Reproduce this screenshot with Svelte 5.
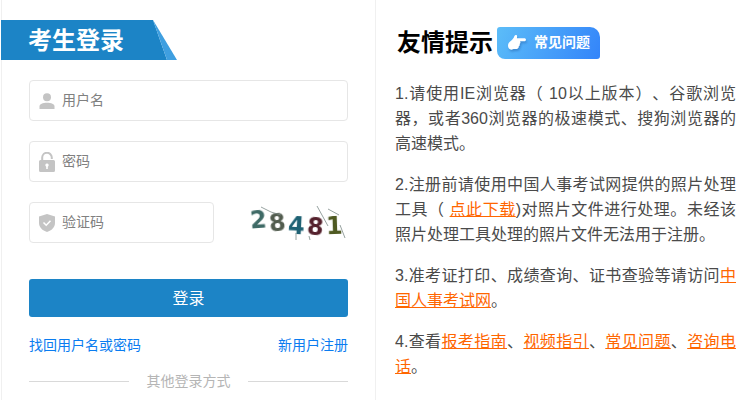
<script>
    const digits = [
        { ch: '2', color: '#3f6a66', rotate: -4, y: -3 },
        { ch: '8', color: '#525c4e', rotate: -6, y: 0 },
        { ch: '4', color: '#1f6274', rotate: 3, y: 3 },
        { ch: '8', color: '#54202c', rotate: 5, y: 4 },
        { ch: '1', color: '#4f5a22', rotate: -2, y: 3 }
    ];
</script>

<div class="page">
    <section class="login">
        <div class="banner">
            <svg class="ribbon" width="176" height="40" viewBox="0 0 176 40">
                <polygon points="0,0 152,0 166,40 0,40" fill="#1c84c6" />
                <polygon points="152,0 176,40 166,40" fill="#3f9fe0" />
            </svg>
            <h2>考生登录</h2>
        </div>

        <form class="form">
            <div class="field">
                <svg width="16" height="16" viewBox="0 0 16 16">
                    <circle cx="8" cy="4.200" r="4" fill="#c4c4c4" />
                    <path d="M0.500 16v-2.600c0-2.200 3.200-3.600 7.500-3.600s7.500 1.400 7.500 3.600V16z" fill="#c4c4c4" />
                </svg>
                <span>用户名</span>
            </div>
            <div class="field">
                <svg width="16" height="20" viewBox="0 0 16 20">
                    <path d="M3.200 9V5.600a4.800 4.800 0 0 1 9.600 0V7" fill="none" stroke="#c4c4c4" stroke-width="2" />
                    <path fill-rule="evenodd" d="M1.500 8h13a1.500 1.500 0 0 1 1.500 1.500v9a1.500 1.500 0 0 1-1.500 1.500h-13A1.500 1.500 0 0 1 0 18.500v-9A1.500 1.500 0 0 1 1.500 8zM8 11.500a1.700 1.700 0 0 0-.8 3.200V17h1.600v-2.300A1.700 1.700 0 0 0 8 11.500z" fill="#c4c4c4" />
                </svg>
                <span>密码</span>
            </div>
            <div class="code-row">
                <div class="field short">
                    <svg width="16" height="18" viewBox="0 0 16 18">
                        <path d="M8 0l8 2.600v6.400c0 4.300-3.400 7.500-8 9-4.600-1.500-8-4.700-8-9V2.600z" fill="#c4c4c4" />
                        <path d="M4.500 8.500l2.700 2.700 4.300-4.500" fill="none" stroke="#fff" stroke-width="1.500" />
                    </svg>
                    <span>验证码</span>
                </div>
                <div class="captcha">
                    {#each digits as d}
                        <b style="color: {d.color}; transform: translateY({d.y}px) rotate({d.rotate}deg)">{d.ch}</b>
                    {/each}
                    <svg class="noise" width="99" height="35" viewBox="0 0 99 35">
                        <path d="M12 2l10 5M22 7l10 3M68 1l11 20M79 4l11 6M91 20l5 13M47 28v7M60 31l1 4" stroke="#7c8a88" stroke-width="0.800" fill="none" />
                    </svg>
                </div>
            </div>
            <button type="button" class="submit"><span>登录</span></button>
            <div class="links">
                <a href="#top">找回用户名或密码</a>
                <a href="#top">新用户注册</a>
            </div>
            <div class="other">
                <i></i>
                <span>其他登录方式</span>
                <i></i>
            </div>
        </form>
    </section>

    <section class="tips">
        <div class="tips-head">
            <h2>友情提示</h2>
            <div class="faq">
                <svg width="18" height="16" viewBox="0 0 18 16">
                    <path d="M7.200 0.300c1-.6 2 .1 1.900 1.200l-.2 1.700h7.400c1 0 1.700.6 1.700 1.500s-.7 1.500-1.700 1.500h-4.400c.5.400.7 1 .5 1.600-.1.500-.4.900-.8 1.100.3.500.3 1.100 0 1.600-.2.400-.5.700-.9.800.2.500.1 1-.2 1.500-.5.800-1.400 1.200-2.500 1.200H5.500C2.400 15.800 0 13.700 0 10.800 0 8.400 1 7 2.700 5.900 4.500 4.700 5.700 2.900 6.200 1.400c.2-.5.500-.9 1-1.100z" fill="#fff" />
                </svg>
                <span>常见问题</span>
            </div>
        </div>
        <p>1.请使用IE浏览器（ 10以上版本）、谷歌浏览器，或者360浏览器的极速模式、搜狗浏览器的高速模式。</p>
        <p>2.注册前请使用中国人事考试网提供的照片处理工具（ <a href="#top">点此下载</a>)对照片文件进行处理。未经该照片处理工具处理的照片文件无法用于注册。</p>
        <p>3.准考证打印、成绩查询、证书查验等请访问<a href="#top">中国人事考试网</a>。</p>
        <p>4.查看<a href="#top">报考指南</a>、<a href="#top">视频指引</a>、<a href="#top">常见问题</a>、<a href="#top">咨询电话</a>。</p>
    </section>
</div>

<style>
    :global(body) {
        margin: 0;
        background: #fff;
        overflow: hidden;
    }

    .page {
        display: flex;
        height: 400px;
        overflow: hidden;
        font-family: "Liberation Sans", "Noto Sans CJK SC", sans-serif;
    }

    .login {
        width: 375px;
        flex: none;
        box-sizing: border-box;
        border-left: 1px solid #f0f0f0;
        border-right: 1px solid #f0f0f0;
        margin-left: 1px;
        padding-top: 20px;
    }

    .banner {
        position: relative;
        height: 40px;
        margin-left: -1px;
        display: flex;
        align-items: center;
        padding-left: 27px;
    }

    .ribbon {
        position: absolute;
        left: 0;
        top: 0;
    }

    .banner h2 {
        position: relative;
        margin: 0 0 3px;
        font-size: 24px;
        font-weight: 700;
        color: #fff;
    }

    .form {
        padding: 20px 27px 0 27px;
    }

    .field {
        box-sizing: border-box;
        height: 41px;
        border: 1px solid #e6e6e6;
        border-radius: 4px;
        display: flex;
        align-items: center;
        gap: 7px;
        padding-left: 9px;
        margin-bottom: 20px;
        font-size: 14px;
        color: #808080;
    }

    .field span {
        margin-bottom: 3px;
    }

    .field svg {
        flex: none;
    }

    .code-row {
        display: flex;
        align-items: flex-start;
        justify-content: space-between;
        margin-bottom: 36px;
    }

    .field.short {
        width: 185px;
        margin-bottom: 0;
    }

    .captcha {
        position: relative;
        width: 99px;
        height: 35px;
        margin-top: 3px;
        box-sizing: border-box;
        padding-right: 4px;
        display: flex;
        align-items: center;
        justify-content: space-around;
        font-size: 24px;
        font-family: "DejaVu Sans", sans-serif;
    }

    .captcha b {
        display: block;
        filter: blur(0.4px);
    }

    .noise {
        position: absolute;
        left: 0;
        top: 0;
    }

    .submit {
        display: block;
        width: 100%;
        height: 38px;
        border: 0;
        border-radius: 3px;
        background: #1c84c6;
        color: #fff;
        font: inherit;
        font-size: 16px;
        padding: 0 0 3px;
    }

    .links {
        display: flex;
        justify-content: space-between;
        margin-top: 20px;
        font-size: 14px;
        line-height: 16px;
    }

    .links a {
        color: #0a7cf0;
        text-decoration: none;
    }

    .other {
        display: flex;
        align-items: center;
        justify-content: space-between;
        margin-top: 20px;
        font-size: 14px;
        line-height: 16px;
        color: #b5b5b5;
    }

    .other i {
        display: block;
        width: 100px;
        height: 1px;
        background: #d9d9d9;
    }

    .tips {
        width: 341px;
        flex: none;
        padding: 27px 0 0 19px;
        font-size: 16px;
        line-height: 25px;
        color: #4a4a4a;
        text-spacing-trim: space-all;
    }

    .tips-head {
        display: flex;
        align-items: center;
        gap: 4px;
        height: 32px;
        padding-left: 2px;
        margin-bottom: 22px;
    }

    .tips-head h2 {
        margin: 0 0 2px;
        font-size: 24px;
        font-weight: 700;
        color: #000;
    }

    .faq {
        width: 103px;
        height: 32px;
        box-sizing: border-box;
        border-radius: 3px 10px 3px 8px;
        background: linear-gradient(115deg, #5cbdf8, #3384fa);
        display: flex;
        align-items: center;
        gap: 8px;
        padding-left: 11px;
        color: #fff;
        font-size: 14px;
        font-weight: 700;
    }

    .faq span {
        margin-bottom: 2px;
    }

    .faq svg {
        flex: none;
        filter: drop-shadow(1px 2px 1px rgba(20, 70, 140, 0.35));
    }

    .tips p {
        margin: 0 0 16px;
        text-align: justify;
    }

    .tips a {
        color: #f60;
        text-decoration: underline;
    }
</style>
